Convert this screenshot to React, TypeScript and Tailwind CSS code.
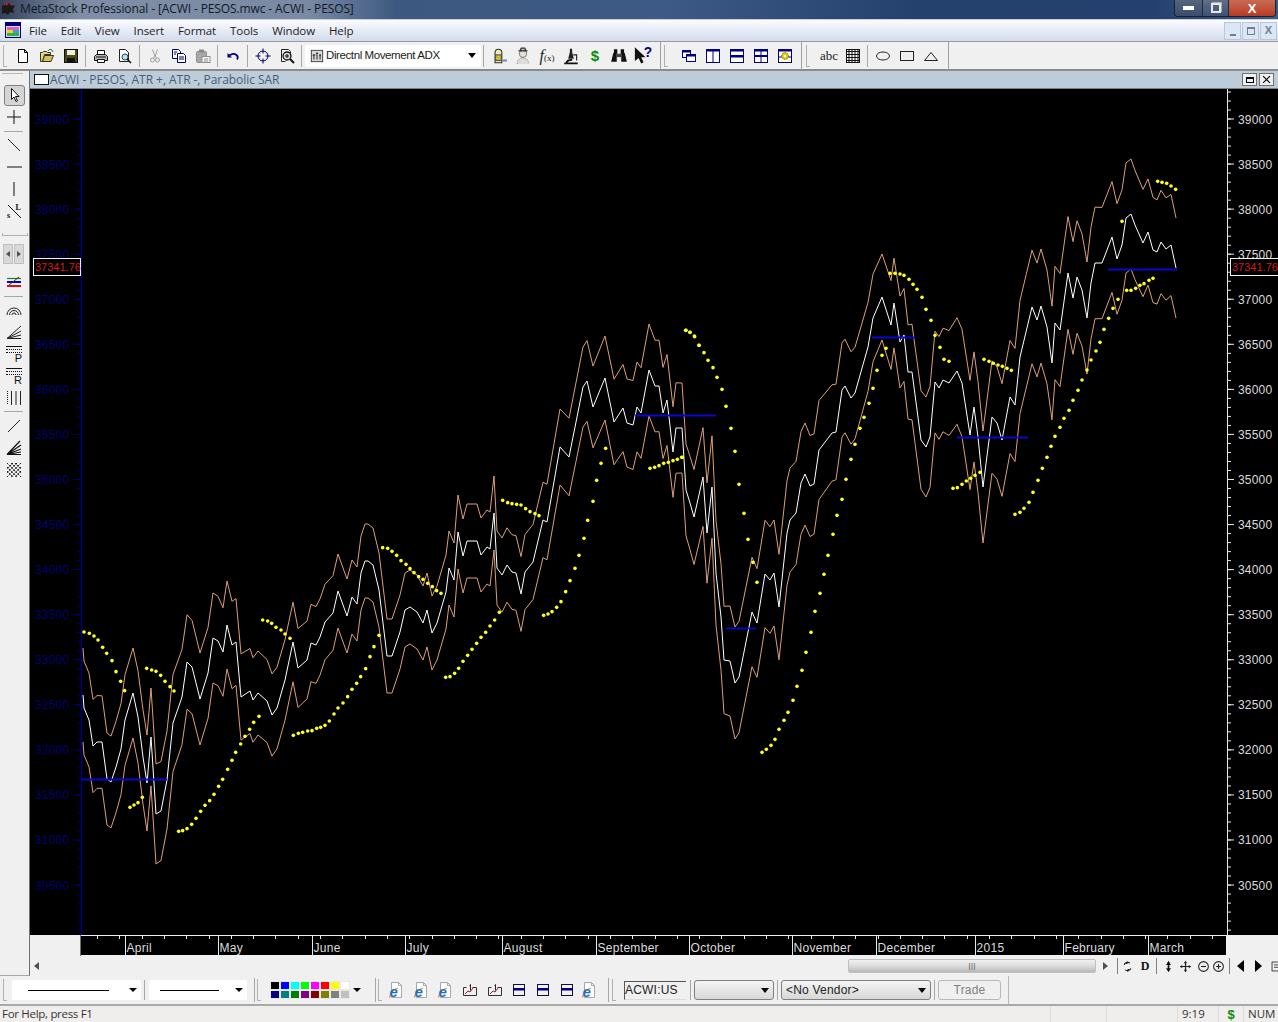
import React from 'react';

// price line as read off the chart, [x, y] in page pixels
const CLOSE: [number, number][] = [
  [83,695],[84,708],[89,720],[93,746],[97,742],[102,742],[107,779],[111,782],[116,767],[121,749],[125,720],[133,693],[138,717],[143,757],[147,783],[151,737],[156,814],[161,811],[167,780],[173,723],[182,697],[187,662],[192,667],[200,699],[208,673],[213,638],[218,641],[223,652],[227,625],[232,645],[236,642],[241,697],[250,691],[253,700],[258,693],[267,701],[272,715],[277,708],[285,680],[293,642],[298,668],[307,660],[311,643],[316,645],[320,637],[325,622],[333,613],[338,591],[347,616],[352,597],[357,604],[361,573],[365,561],[368,561],[373,565],[379,590],[387,656],[392,656],[400,632],[405,610],[410,607],[417,612],[423,623],[427,610],[432,633],[437,623],[446,592],[449,568],[454,580],[458,532],[463,556],[467,541],[477,541],[481,555],[487,547],[490,549],[494,513],[497,568],[502,575],[507,565],[512,572],[516,573],[521,594],[525,572],[533,562],[543,520],[547,522],[560,447],[569,457],[583,387],[587,381],[593,407],[605,378],[614,422],[623,408],[627,423],[633,425],[637,407],[641,413],[649,370],[655,386],[659,386],[663,413],[667,400],[673,452],[676,428],[682,428],[686,490],[690,503],[694,517],[703,477],[707,533],[712,487],[716,573],[721,617],[724,660],[730,661],[735,683],[739,677],[752,612],[757,623],[765,574],[770,580],[774,573],[779,607],[787,533],[790,520],[796,513],[801,483],[805,474],[810,486],[814,484],[819,450],[832,433],[836,432],[842,390],[845,386],[851,398],[855,393],[868,347],[873,318],[882,297],[891,325],[894,303],[900,342],[904,335],[908,372],[912,372],[921,440],[926,447],[930,437],[935,382],[939,388],[943,380],[949,383],[957,371],[962,383],[970,435],[974,407],[978,437],[983,487],[992,417],[997,423],[1002,440],[1010,397],[1015,405],[1020,357],[1032,307],[1037,320],[1041,306],[1047,327],[1052,363],[1055,323],[1060,330],[1068,273],[1073,298],[1077,277],[1082,290],[1087,318],[1091,283],[1095,263],[1102,263],[1112,237],[1117,259],[1122,245],[1126,218],[1131,214],[1135,225],[1143,243],[1148,232],[1153,250],[1157,252],[1161,242],[1166,249],[1171,245],[1176,268],
];

// half width of the ATR band at a few x positions
const BAND: [number, number][] = [
  [83,47],[133,45],[156,50],[200,46],[227,44],[290,40],[338,37],[392,37],[458,37],[494,37],[560,38],[605,42],[649,46],[682,45],[735,56],[774,53],[805,51],[882,43],[926,50],[983,56],[1041,57],[1131,55],[1176,50],
];

const bandAt = (x: number) => {
  for (let i = 0; i < BAND.length - 1; i++) {
    const [a, av] = BAND[i];
    const [b, bv] = BAND[i + 1];
    if (x >= a && x <= b) return av + ((bv - av) * (x - a)) / (b - a);
  }
  return 50;
};

const points = (off: number) => CLOSE.map(([x, y]) => `${x},${(y + off * bandAt(x)).toFixed(1)}`).join(' ');

// parabolic SAR dots, zoomed coordinates get scaled back with fromZoom
const fromZoom = (ox: number, oy: number, list: number[][]) => list.map(([x, y]) => [ox + x / 3, oy + y / 3]);

const SAR = [
  ...fromZoom(80, 620, [[12,36],[28,40],[42,48],[54,60],[68,82],[80,100],[96,122],[108,155],[122,184],[134,212]]),
  ...fromZoom(80, 620, [[200,145],[215,150],[228,154],[242,166],[255,184],[270,200],[282,213]]),
  ...fromZoom(80, 620, [[150,562],[162,555],[174,548],[187,532]]),
  ...fromZoom(80, 620, [[296,634],[308,632],[321,626],[335,613],[348,595],[362,574],[375,556],[389,542],[402,523],[416,499],[428,478],[443,448],[456,421],[467,397],[482,372],[495,349],[509,328],[521,307],[537,289]]),
  ...fromZoom(80, 620, [[548,0],[563,3],[575,10],[588,22],[603,30],[615,42],[630,55]]),
  ...fromZoom(80, 620, [[640,346],[655,340],[668,337],[683,333],[696,332],[710,325],[722,322],[735,316],[748,303]]),
  [334,714],[338,708],[343,703],
  ...fromZoom(320, 320, [[83,1130],[96,1108],[110,1090],[122,1070],[137,1046],[150,1010],[162,980],[177,946]]),
  ...fromZoom(320, 320, [[188,683],[203,685],[216,694],[230,706],[243,722],[258,733],[270,746],[282,758],[296,770],[309,778],[323,790],[337,800],[350,812],[363,820]]),
  ...fromZoom(320, 320, [[377,1072],[390,1070],[404,1060],[416,1045],[429,1024],[443,1006],[456,988],[470,970],[483,952],[497,937],[510,918],[524,900],[538,877]]),
  ...fromZoom(320, 320, [[548,541],[563,548],[576,551],[590,553],[603,555],[617,566],[630,575],[645,581],[657,587]]),
  ...fromZoom(320, 320, [[671,886],[684,882],[696,875],[710,862],[723,845],[737,815],[750,782],[765,745],[777,706],[792,655],[803,601],[819,544],[830,481],[843,430],[857,385]]),
  ...fromZoom(320, 320, [[990,445],[1004,442],[1017,437],[1031,430],[1045,427],[1059,422],[1072,418],[1087,412]]),
  ...fromZoom(320, 320, [[1097,31],[1110,37],[1123,48],[1137,76]]),
  ...fromZoom(680, 240, [[5,652],[18,271],[30,277],[44,290],[57,316],[72,338],[84,361],[99,383],[111,412],[126,448],[138,499],[153,565],[165,634],[177,733],[192,820],[204,898],[219,967],[231,1027]]),
  ...fromZoom(680, 240, [[246,1537],[259,1528],[273,1516],[285,1498],[297,1468],[312,1441],[324,1417],[339,1381],[351,1339],[366,1291],[378,1237],[393,1177],[405,1114],[420,1060],[432,1003],[444,946],[459,883],[471,826],[486,778],[498,718],[513,658],[525,613],[540,565],[552,532],[567,490],[579,445],[591,391],[606,346],[618,325]]),
  ...fromZoom(680, 240, [[630,100],[645,100],[660,102],[672,106],[687,118],[699,133],[711,148],[726,172],[738,208],[753,241],[765,286],[780,322],[792,358],[807,364]]),
  ...fromZoom(680, 240, [[819,745],[832,743],[846,733],[859,723],[872,715],[885,706],[900,697]]),
  ...fromZoom(680, 240, [[912,358],[927,364],[940,370],[954,375],[967,379],[981,385],[994,391]]),
  ...fromZoom(680, 240, [[1005,823],[1020,817],[1032,805],[1047,787],[1059,757],[1074,721],[1087,685],[1101,652],[1113,619],[1125,589],[1140,562],[1152,535],[1167,511],[1179,481],[1194,451]]),
  [1082,380],[1087,370],[1091,360],[1096,351],
  ...fromZoom(1000, 150, [[300,577],[312,538],[326,505],[339,475],[354,448],[366,214]]),
  ...fromZoom(1000, 150, [[380,421],[393,421],[407,415],[420,406],[432,401],[447,391],[459,385]]),
  ...fromZoom(1000, 150, [[473,94],[486,97],[500,100],[513,108],[527,118]]),
];

const LEVELS = [[82,167,779],[635,716,415],[726,756,628],[872,915,337],[957,1028,437],[1108,1177,269]];
const PRICES = Array.from({ length: 18 }, (_, i) => 39000 - i * 500);
const priceY = (p: number) => 119 + ((39000 - p) / 500) * 45.06;
const MINOR = Array.from({ length: 94 }, (_, i) => 92 + i * 9.012);
const MONTHS: [string, number][] = [['April',125],['May',218],['June',312],['July',405],['August',502],['September',596],['October',689],['November',792],['December',876],['2015',975],['February',1063],['March',1148]];
const WEEKS = Array.from({ length: 51 }, (_, i) => 97 + i * 22.3);
const SWATCHES = ['#000000','#0000ff','#00ffff','#00ff00','#ff00ff','#ff0000','#ffff00','#ffffff','#000080','#008080','#008000','#800080','#800000','#808000','#808080','#c0c0c0'];
const MENUS: [string, string][] = [['File','ml-[29px]'],['Edit','ml-[14px]'],['View','ml-[14px]'],['Insert','ml-[14px]'],['Format','ml-[14px]'],['Tools','ml-[14px]'],['Window','ml-[14px]'],['Help','ml-[14px]']];

function Ico({ children, s = 16 }: { children: React.ReactNode; s?: number }) {
  return <svg width={s} height={s} viewBox="0 0 16 16" fill="none" className="block">{children}</svg>;
}

function Tool({ children }: { children: React.ReactNode }) {
  return <div className="w-[24px] h-[24px] flex items-center justify-center shrink-0">{children}</div>;
}

function Sep() {
  return <div className="w-px h-[22px] bg-[#a8a8a8] ml-[2px] mr-[3px] shrink-0" />;
}

function Grip() {
  return <div className="w-[4px] h-[22px] border-l border-b border-[#b0b0b0] shrink-0" />;
}

function Side({ children }: { children: React.ReactNode }) {
  return <div className="w-[30px] h-[22px] flex items-center justify-center shrink-0 pr-[2px]">{children}</div>;
}

function SideRule() {
  return <div className="h-[6px] flex items-center pl-[4px] pr-[6px]"><div className="h-px w-full bg-[#a8a8a8]" /></div>;
}

function Arrow({ className = '' }: { className?: string }) {
  return <div className={`w-0 h-0 border-l-[4px] border-r-[4px] border-t-[4px] border-l-transparent border-r-transparent border-t-black ${className}`} />;
}

function Win({ kind }: { kind: 'cascade' | 'v' | 'h' | 'q' | 'gear' }) {
  return (
    <Ico>
      {kind === 'cascade' && <><rect x="1.5" y="2.5" width="8" height="7" fill="#fff" stroke="#000080" /><rect x="1" y="2" width="9" height="2.5" fill="#000080" /><rect x="5.5" y="6.5" width="9" height="7" fill="#fff" stroke="#000080" /><rect x="5" y="6" width="10" height="2.5" fill="#000080" /></>}
      {kind === 'v' && <><rect x="1.5" y="1.5" width="13" height="13" fill="#fff" stroke="#000080" /><rect x="1" y="1" width="14" height="2.5" fill="#000080" /><path d="M8 1v14" stroke="#000080" /></>}
      {kind === 'h' && <><rect x="1.5" y="1.5" width="13" height="13" fill="#fff" stroke="#000080" /><rect x="1" y="1" width="14" height="2.5" fill="#000080" /><rect x="1" y="7" width="14" height="2.5" fill="#000080" /></>}
      {kind === 'q' && <><rect x="1.5" y="1.5" width="13" height="13" fill="#fff" stroke="#000080" /><rect x="1" y="1" width="14" height="2.5" fill="#000080" /><rect x="1" y="7" width="14" height="2" fill="#000080" /><path d="M8 1v14" stroke="#000080" /></>}
      {kind === 'gear' && <><rect x="1.5" y="1.5" width="13" height="13" fill="#fff" stroke="#000080" /><rect x="1" y="1" width="14" height="2.5" fill="#000080" /><path d="M1 9h14" stroke="#000080" /><circle cx="8" cy="8" r="3.4" fill="#e0d000" stroke="#806000" strokeDasharray="1.5 1" /><circle cx="8" cy="8" r="1.2" fill="#fff" /></>}
    </Ico>
  );
}

function IeDoc() {
  return (
    <svg width="16" height="18" viewBox="0 0 16 18" fill="none" className="block">
      <path d="M3.5 1.5h7l3 3v12h-10z" fill="#fff" stroke="#a8a8a8" />
      <path d="M10.5 1.5v3h3" stroke="#a8a8a8" />
      <path d="M1.500 16.500c1-4 4-8 8.500-9.500" stroke="#d89a28" strokeWidth="1.300" />
      <text x="1.500" y="15.500" fontSize="15" fontWeight="700" fontStyle="italic" fill="#1f6fc4" fontFamily="Liberation Sans">e</text>
    </svg>
  );
}

function ChartIco() {
  return (
    <Ico>
      <path d="M1.5 5.5h3M10.5 5.5h4v8h-13v-8" stroke="#333" />
      <path d="M3 12l3-3 2 1 3-4" stroke="#a02020" />
      <path d="M7.5 3.5l1-1v6" stroke="#222" />
    </Ico>
  );
}

function WinBar() {
  return (
    <Ico>
      <rect x="2.5" y="2.5" width="11" height="11" stroke="#101030" fill="#f0f0f0" />
      <rect x="2" y="6" width="12" height="2.5" fill="#000080" />
    </Ico>
  );
}

function TopToolbar() {
  return (
    <div className="h-[30px] flex items-center bg-[#f0f0f0] border-t border-[#9a9a9a] border-b-2 border-b-[#8a8a8a] shrink-0 pl-[3px]">
      <Grip />
      <div className="w-[4px] shrink-0" />
      <Tool><Ico><path d="M3.5 1.5h6l3 3v10h-9z" fill="#fff" stroke="#000" /><path d="M9.5 1.5v3h3" stroke="#000" /></Ico></Tool>
      <Tool><Ico><path d="M1.5 13.5v-9h2l1-1h3l1 1h3v2h-6l-2 7z" fill="#e8d878" stroke="#333" /><path d="M3.5 13.5l2-6h9l-2.5 6z" fill="#d8c050" stroke="#333" /><path d="M9 3c1-2 3-2 4-1l1 2" stroke="#208020" /></Ico></Tool>
      <Tool><Ico><rect x="1.5" y="1.5" width="13" height="13" fill="#4a4a1a" stroke="#111" /><rect x="4" y="2" width="8" height="5" fill="#f4f0d8" /><rect x="4" y="10" width="8" height="4" fill="#111" /></Ico></Tool>
      <Sep />
      <Tool><Ico><path d="M4.5 6.5v-4h7v4" fill="#fff" stroke="#111" /><path d="M1.5 8.5l2-2h9l2 2v4h-13z" fill="#b8b8b8" stroke="#111" /><path d="M4.5 11.5h7v3h-7z" fill="#fff" stroke="#111" /><path d="M3 9h10" stroke="#111" /></Ico></Tool>
      <Tool><Ico><path d="M2.5 1.5h6l3 3v9h-9z" fill="#fff" stroke="#222" /><circle cx="8" cy="9" r="3" fill="#bfe0f0" stroke="#205060" /><path d="M10 11l4 4" stroke="#111" strokeWidth="1.6" /></Ico></Tool>
      <Sep />
      <Tool><Ico><path d="M5.5 1.5l2.5 7 2.5-7" stroke="#a0a0a0" /><circle cx="5.5" cy="12" r="2" stroke="#a0a0a0" /><circle cx="10.5" cy="12" r="2" stroke="#a0a0a0" /><path d="M6.5 10L8 8l1.500 2" stroke="#a0a0a0" /></Ico></Tool>
      <Tool><Ico><path d="M1.500 1.500h6l2 2v7h-8z" fill="#fff" stroke="#000060" /><path d="M6.500 5.500h6l2 2v7h-8z" fill="#fff" stroke="#000060" /><path d="M3 4h3M3 6h2M8 9h5M8 11h5" stroke="#000060" /></Ico></Tool>
      <Tool><Ico><rect x="1.500" y="3.500" width="10" height="11" rx="1" fill="#a8a8a8" stroke="#909090" /><rect x="4" y="1.500" width="5" height="3" fill="#888" /><rect x="7" y="8.500" width="8" height="6" fill="#f4f4f4" stroke="#909090" /><path d="M9 11h4M9 13h4" stroke="#909090" /></Ico></Tool>
      <Sep />
      <Tool><Ico><path d="M3.500 8.500C5 6 9 5 11.500 7c1.500 1.200 1.500 3 .5 4.500" stroke="#000080" strokeWidth="1.700" /><path d="M2.500 5v4.500H7z" fill="#000080" /></Ico></Tool>
      <Sep />
      <Tool><Ico><circle cx="8" cy="8" r="5" stroke="#000060" /><path d="M8 0.500v5M8 10.500v5M0.500 8h5M10.500 8h5" stroke="#000060" /></Ico></Tool>
      <Tool><Ico><path d="M2.500 1.500h7l2 2v3M2.500 1.500v12h4" fill="#fff" stroke="#222" /><circle cx="8" cy="8" r="4" fill="#d8d8d8" stroke="#111" strokeWidth="1.300" /><path d="M6 8h4M8 6v4" stroke="#111" /><path d="M11 11l4 4" stroke="#111" strokeWidth="2" /></Ico></Tool>
      <Sep />
      <div className="w-[176px] h-[22px] bg-white flex items-center shrink-0 rounded-[2px]">
        <div className="ml-[5px]"><Ico s={14}><rect x="1.500" y="1.500" width="13" height="13" fill="#d8d8d8" stroke="#333" /><path d="M4.500 12V6M8 12V4M11.500 12V6M3 7h3M7 5h2M10.500 7h2" stroke="#111" /></Ico></div>
        <span className="ml-[2px] text-[11.5px] text-[#222] tracking-[-0.4px] font-['Liberation_Sans',sans-serif] whitespace-nowrap">Directnl Movement ADX</span>
        <Arrow className="ml-auto mr-[5px] border-t-[5px]" />
      </div>
      <Sep />
      <Tool><Ico s={18}><path d="M4.500 14v-9a3 3 0 0 1 6 0v9z" fill="#f0e8c8" stroke="#333" /><rect x="5" y="7" width="5" height="5" fill="#d8c020" stroke="#555" /><path d="M11 12h4" stroke="#8090a0" strokeWidth="2" /></Ico></Tool>
      <Tool><Ico s={18}><circle cx="8" cy="6" r="3.200" fill="#e8e0d0" stroke="#888" /><path d="M4 3.500h8M5.500 3l1-2h3l1 2" stroke="#333" strokeWidth="1.200" /><path d="M3 15c0-4 2-5 5-5s5 1 5 5" fill="#ddd" stroke="#999" strokeDasharray="1 1" /></Ico></Tool>
      <Tool><span className="font-['Liberation_Serif',serif] italic text-[16px] leading-none text-[#222]">f<span className="text-[9px] not-italic">(x)</span></span></Tool>
      <Tool><Ico s={18}><path d="M2 14.500h12M4 14.500c0-2 2-3 5-3" stroke="#111" strokeWidth="1.500" /><path d="M7 1.500h2v3l1.500 6H5.500L7 4.500z" fill="#222" /><path d="M10 7h3v5" stroke="#222" /></Ico></Tool>
      <Tool><span className="text-[15px] font-bold leading-none text-[#0a8a0a] font-['Liberation_Sans',sans-serif]">$</span></Tool>
      <Tool><Ico s={18}><path d="M1 13l2-8h3v8zM15 13l-2-8h-3v8z" fill="#111" /><rect x="3.500" y="2" width="3" height="4" fill="#111" /><rect x="9.500" y="2" width="3" height="4" fill="#111" /><rect x="6" y="6" width="4" height="3" fill="#444" /></Ico></Tool>
      <Tool><Ico s={20}><path d="M1.500 1v11l3-2.500 2 4.500 2-1-2-4h3.500z" fill="#111" /><text x="8.500" y="9" fontSize="11" fontWeight="700" fill="#000080" fontFamily="Liberation Sans">?</text></Ico></Tool>
      <div className="w-[6px] h-[28px] border-r border-[#a0a0a0] shrink-0" />
      <div className="w-[3px] shrink-0" />
      <Grip />
      <div className="w-[9px] shrink-0" />
      <Tool><Win kind="cascade" /></Tool>
      <Tool><Win kind="v" /></Tool>
      <Tool><Win kind="h" /></Tool>
      <Tool><Win kind="q" /></Tool>
      <Tool><Win kind="gear" /></Tool>
      <div className="w-[5px] h-[28px] border-r border-[#a0a0a0] shrink-0" />
      <div className="w-[4px] shrink-0" />
      <Grip />
      <div className="w-[7px] shrink-0" />
      <Tool><span className="text-[13px] leading-none text-[#222] font-['Liberation_Serif',serif]">abc</span></Tool>
      <Tool><Ico><rect x="1.500" y="1.500" width="13" height="13" fill="#fff" stroke="#111" /><path d="M1 3.500h14M1 6.500h14M1 9.500h14M1 12.500h14M4 1v14M7 1v14M10 1v14M13 1v14" stroke="#111" /></Ico></Tool>
      <Sep />
      <Tool><Ico><ellipse cx="8" cy="8" rx="6.500" ry="4" stroke="#222" /></Ico></Tool>
      <Tool><Ico><rect x="1.500" y="3.500" width="13" height="9" stroke="#222" /></Ico></Tool>
      <Tool><Ico><path d="M1.500 12.500h13L8 4.500z" stroke="#222" /></Ico></Tool>
      <div className="w-[6px] h-[28px] border-r border-[#a0a0a0] shrink-0" />
    </div>
  );
}

function LeftToolbar() {
  return (
    <div className="w-[30px] bg-[#f0f0f0] border-r border-[#707070] border-b border-b-[#a8a8a8] flex flex-col shrink-0 pt-[13px] relative">
      <div className="absolute left-[2px] right-[6px] top-[2px] h-px bg-[#b8b8b8]" />
      <Side><div className="w-[21px] h-[21px] bg-[#d4d4d4] border border-[#808080] rounded-[3px] flex items-center justify-center"><Ico><path d="M5.500 1.500v11l2.500-2.500 2 4.500 1.500-.7-2-4.300h3.500z" fill="#fff" stroke="#111" /></Ico></div></Side>
      <Side><Ico><path d="M8 1v14M1 8h14" stroke="#111" /></Ico></Side>
      <SideRule />
      <Side><Ico><path d="M2 2l12 12" stroke="#222" /></Ico></Side>
      <Side><Ico><path d="M1 8h15" stroke="#111" /></Ico></Side>
      <Side><Ico><path d="M8 1v14" stroke="#111" /></Ico></Side>
      <Side><Ico><path d="M2 2l13 13" stroke="#111" /><text x="9.500" y="7" fontSize="8" fontWeight="700" fontFamily="Liberation Serif" fill="#111">L</text><text x="1" y="14.500" fontSize="8" fontWeight="700" fontFamily="Liberation Serif" fill="#111">s</text></Ico></Side>
      <div className="h-[22px] flex items-center pl-[2px] pr-[1px] pt-[2px]"><div className="h-[3px] w-full border border-t-0 border-[#b0b0b0]" /></div>
      <div className="h-[22px] flex justify-center pr-[2px] shrink-0">
        <div className="w-[10px] h-[20px] bg-[#d8d8d8] border border-[#c0c0c0] flex items-center justify-center"><div className="w-0 h-0 border-y-[3px] border-r-[4px] border-y-transparent border-r-[#505050]" /></div>
        <div className="w-[10px] h-[20px] ml-px bg-[#d8d8d8] border border-[#c0c0c0] flex items-center justify-center"><div className="w-0 h-0 border-y-[3px] border-l-[4px] border-y-transparent border-l-[#505050]" /></div>
      </div>
      <div className="h-[5px]" />
      <Side><Ico><path d="M1 4.500h14" stroke="#208020" strokeWidth="1.200" /><path d="M1 8h14" stroke="#0000d0" strokeWidth="2" /><path d="M1 12h14" stroke="#e01010" strokeWidth="2" /><path d="M3 11L13 3" stroke="#333" /></Ico></Side>
      <SideRule />
      <Side><Ico><path d="M1 13a7 7 0 0 1 14 0M3.500 13a4.500 4.500 0 0 1 9 0M6 13a2 2 0 0 1 4 0" stroke="#222" /></Ico></Side>
      <Side><Ico><path d="M1 14.500L15 2M1 14.500L15 7M1 14.500L15 11M1 14.500h14" stroke="#222" /></Ico></Side>
      <Side><div className="w-[16px] h-[16px] relative font-['Liberation_Sans',sans-serif]"><div className="border-t border-[#111] h-[3px]" /><div className="border-t border-dotted border-[#111] h-[3px]" /><div className="border-t border-dotted border-[#111] h-[3px]" /><span className="absolute right-0 bottom-[-2px] text-[11px] leading-none text-[#111]">P</span></div></Side>
      <Side><div className="w-[16px] h-[16px] relative font-['Liberation_Sans',sans-serif]"><div className="border-t border-[#111] h-[3px]" /><div className="border-t border-dotted border-[#111] h-[3px]" /><div className="border-t border-dotted border-[#111] h-[3px]" /><span className="absolute right-0 bottom-[-2px] text-[11px] leading-none text-[#111]">R</span></div></Side>
      <Side><Ico><path d="M1.500 1v14" stroke="#222" strokeDasharray="1 1" /><path d="M5.500 1v14M10 1v14M14.500 1v14" stroke="#222" /></Ico></Side>
      <div className="h-[4px] flex items-end pl-[4px] pr-[6px] -mt-[1px]"><div className="h-px w-full bg-[#a8a8a8]" /></div>
      <div className="h-[3px]" />
      <Side><Ico><path d="M2 14L14 2" stroke="#222" /></Ico></Side>
      <Side><Ico><path d="M1 14.500L14 1M1 14.500L15 5M1 14.500L15 9M1 14.500L15 12M1 14.500h14" stroke="#111" strokeWidth="1.200" /></Ico></Side>
      <Side><Ico><path d="M1 1l14 14M1 5l10 10M1 9l6 6M5 1l10 10M9 1l6 6M15 1L1 15M11 1L1 11M7 1L1 7M15 5L5 15M15 9l-6 6" stroke="#222" strokeDasharray="2 1" /></Ico></Side>
    </div>
  );
}

function Chart() {
  return (
    <svg viewBox="30 89 1248 846" className="block w-[1248px] h-[846px] bg-black shrink-0" fontFamily="Liberation Sans, Arial, sans-serif" fontSize="12">
      {/* left scale, nearly invisible on black */}
      <path d="M81.500 89v846" stroke="#000080" strokeWidth="1.400" />
      {MINOR.map(y => <path key={y} d={`M77 ${y}h4`} stroke="#000060" />)}
      {PRICES.map(p => (
        <g key={p}>
          <path d={`M73 ${priceY(p)}h8`} stroke="#000070" />
          <text x="35" y={priceY(p) + 4.500} fill="#000070" letterSpacing="0.200">{p}</text>
        </g>
      ))}
      <polyline points={points(-1)} fill="none" stroke="#e8a87c" strokeWidth="0.950" />
      <polyline points={points(1)} fill="none" stroke="#e8a87c" strokeWidth="0.950" />
      <polyline points={points(0)} fill="none" stroke="#ffffff" />
      {/* wider than 1px so the blue survives the screenshot's chroma smearing */}
      {LEVELS.map(([a, b, y]) => <path key={a} d={`M${a} ${y + 0.500}H${b}`} stroke="#0808d0" strokeWidth="1.800" />)}
      {SAR.map(([x, y], i) => <circle key={i} cx={x} cy={y} r="1.800" fill="#ffff20" />)}
      {/* right scale */}
      <path d="M1227.500 89v846" stroke="#e8e8e8" />
      {MINOR.map(y => <path key={y} d={`M1227 ${y}h4`} stroke="#e8e8e8" />)}
      {PRICES.map(p => (
        <g key={p}>
          <path d={`M1227 ${priceY(p)}h7`} stroke="#e8e8e8" />
          <text x="1238" y={priceY(p) + 4.500} fill="#dcdcdc" letterSpacing="0.200">{p}</text>
        </g>
      ))}
      <rect x="33.500" y="258.500" width="47" height="17" fill="#000" stroke="#f0f0f0" />
      <text x="35" y="271" fill="#d81818" fontSize="11">37341.76</text>
      <rect x="1230.500" y="258.500" width="50" height="17" fill="#000" stroke="#f0f0f0" />
      <text x="1232" y="271" fill="#d81818" fontSize="11">37341.76</text>
    </svg>
  );
}

function TimeAxis() {
  return (
    <div className="flex h-[21px] shrink-0 bg-[#f0f0f0]">
      <div className="w-[51px] border-r border-[#707070] shrink-0" />
      <svg viewBox="81 935 1145 21" className="block w-[1145px] h-[21px] bg-black shrink-0" fontFamily="Liberation Sans, Arial, sans-serif" fontSize="12">
        <path d="M81 935.500h1145M81 955.500h1145" stroke="#f0f0f0" />
        {WEEKS.map(x => <path key={x} d={`M${Math.round(x)}.5 935v4`} stroke="#e8e8e8" />)}
        {MONTHS.map(([m, x]) => (
          <g key={m}>
            <path d={`M${x}.5 935v20`} stroke="#e8e8e8" />
            <text x={x + 1.500} y="951.500" fill="#dcdcdc" letterSpacing="0.300">{m}</text>
          </g>
        ))}
      </svg>
    </div>
  );
}

function ScrollRow() {
  const dim = 'w-[18px] h-[18px] flex items-center justify-center shrink-0';
  return (
    <div className="flex items-center h-[20px] bg-[#f0f0f0] shrink-0 pl-[4px]">
      <div className="w-0 h-0 border-y-[4px] border-r-[5px] border-y-transparent border-r-[#505050]" />
      <div className="ml-auto w-[248px] h-[14px] bg-gradient-to-b from-[#f0f0f0] via-[#dcdcdc] to-[#b8b8b8] border border-[#c0c0c0] rounded-[2px] flex items-center justify-center text-[9px] leading-none text-[#666]">III</div>
      <div className="w-[182px] flex items-center shrink-0 overflow-hidden">
        <div className={dim}><div className="w-0 h-0 border-y-[4px] border-l-[5px] border-y-transparent border-l-[#505050]" /></div>
        <div className="w-px h-[16px] bg-[#808080] ml-[3px] shrink-0" />
        <div className={dim}><Ico s={13}><path d="M8 1v4H5zM8 15v-4h3z" fill="#222" /><path d="M4 6c0-3 5-4 7-2M12 10c0 3-5 4-7 2" stroke="#222" strokeWidth="1.300" /></Ico></div>
        <div className={`${dim} font-['Liberation_Serif',serif] font-bold text-[12px] text-[#111]`}>D</div>
        <div className="w-px h-[16px] bg-[#808080] ml-[2px] mr-[2px] shrink-0" />
        <div className={dim}><Ico s={13}><path d="M8 1l3 5H5zM8 15l-3-5h6z" fill="#111" /><path d="M8 5v6" stroke="#111" strokeWidth="2" /></Ico></div>
        <div className={`${dim} -ml-px`}><Ico s={13}><path d="M8 2v12M2 8h12" stroke="#222" strokeWidth="1.500" /><path d="M8 1l2 3H6zM8 15l-2-3h4zM1 8l3-2v4zM15 8l-3 2V6z" fill="#222" /></Ico></div>
        <div className={dim}><Ico s={13}><circle cx="8" cy="8" r="6" stroke="#222" strokeWidth="1.300" /><path d="M5 8h6" stroke="#222" strokeWidth="1.400" /></Ico></div>
        <div className={`${dim} -ml-[3px]`}><Ico s={13}><circle cx="8" cy="8" r="6" stroke="#222" strokeWidth="1.300" /><path d="M5 8h6M8 5v6" stroke="#222" strokeWidth="1.400" /></Ico></div>
        <div className="w-px h-[16px] bg-[#808080] ml-[2px] mr-px shrink-0" />
        <div className={dim}><div className="w-0 h-0 border-y-[6px] border-r-[7px] border-y-transparent border-r-black" /></div>
        <div className={dim}><div className="w-0 h-0 border-y-[6px] border-l-[7px] border-y-transparent border-l-black" /></div>
        <div className={dim}><Ico s={13}><rect x="2.500" y="2.500" width="11" height="11" stroke="#222" /><path d="M5 6h6M5 9h6" stroke="#222" /></Ico></div>
      </div>
    </div>
  );
}

function BottomToolbar() {
  const field = "h-[20px] rounded-[2px] flex items-center shrink-0";
  return (
    <div className="h-[28px] bg-[#f0f0f0] flex items-center shrink-0 pl-[3px] font-['Liberation_Sans',sans-serif] text-[12px] text-[#222]">
      <Grip />
      <div className={`${field} w-[129px] bg-white ml-[5px]`}>
        <div className="ml-[16px] w-[81px] h-px bg-black" />
        <Arrow className="ml-auto mr-[4px]" />
      </div>
      <div className="w-px h-[20px] bg-[#a8a8a8] ml-[3px] shrink-0" />
      <div className={`${field} w-[98px] bg-white ml-[4px]`}>
        <div className="ml-[11px] w-[59px] h-px bg-black" />
        <Arrow className="ml-auto mr-[4px]" />
      </div>
      <div className="w-px h-[24px] bg-[#a8a8a8] ml-[7px] shrink-0" />
      <div className="w-[2px] shrink-0" />
      <Grip />
      <div className="grid grid-cols-[repeat(8,10px)] grid-rows-[repeat(2,9px)] ml-[9px] shrink-0">
        {SWATCHES.map(c => (
          <div key={c} className="border border-[#e8e8e8]" style={{ backgroundColor: c }} />
        ))}
      </div>
      <Arrow className="ml-[3px]" />
      <div className="w-px h-[24px] bg-[#a8a8a8] ml-[14px] shrink-0" />
      <div className="w-[2px] shrink-0" />
      <Grip />
      <div className="w-[2px] shrink-0" />
      <Tool><IeDoc /></Tool>
      <div className="w-px shrink-0" />
      <Tool><IeDoc /></Tool>
      <Tool><IeDoc /></Tool>
      <div className="w-px shrink-0" />
      <Tool><ChartIco /></Tool>
      <div className="w-px shrink-0" />
      <Tool><ChartIco /></Tool>
      <Tool><WinBar /></Tool>
      <Tool><WinBar /></Tool>
      <Tool><WinBar /></Tool>
      <div className="-ml-[2px] shrink-0"><Tool><IeDoc /></Tool></div>
      <div className="w-px h-[24px] bg-[#a8a8a8] ml-[7px] shrink-0" />
      <div className="w-[3px] shrink-0" />
      <Grip />
      <div className="w-[8px] shrink-0" />
      <div className="w-[62px] h-[19px] border-t border-l border-[#555] border-b border-b-[#ddd] bg-[#f0f0f0] flex items-center shrink-0 tracking-[0.2px]">ACWI:US</div>
      <div className="w-px h-[20px] bg-[#a8a8a8] ml-[4px] shrink-0" />
      <div className={`${field} w-[80px] ml-[3px] border border-[#808080] rounded-[3px] bg-gradient-to-b from-[#f4f4f4] to-[#d8d8d8]`}>
        <Arrow className="ml-auto mr-[4px] border-t-[5px]" />
      </div>
      <div className="w-px h-[20px] bg-[#a8a8a8] ml-[3px] shrink-0" />
      <div className={`${field} w-[150px] ml-[3px] border border-[#808080] rounded-[3px] bg-gradient-to-b from-[#f4f4f4] to-[#d8d8d8] pl-[4px] tracking-[0.2px]`}>
        &lt;No Vendor&gt;
        <Arrow className="ml-auto mr-[4px] border-t-[5px]" />
      </div>
      <div className="w-px h-[20px] bg-[#a8a8a8] ml-[3px] shrink-0" />
      <div className="w-[63px] h-[20px] ml-[3px] border border-[#b8b8b8] rounded-[3px] flex items-center justify-center text-[#808080] shrink-0 tracking-[0.2px]">Trade</div>
      <div className="w-px h-[28px] bg-[#b8b8b8] ml-[7px] shrink-0" />
    </div>
  );
}

function StatusBar() {
  const panel = 'h-full flex items-center border-l border-[#dcdcdc] shrink-0';
  return (
    <div className="h-[18px] flex items-center bg-[#f0eeec] border-t-2 border-[#a8a8a8] text-[11.5px] leading-none text-[#333] shrink-0 font-['Open_Sans',sans-serif]">
      <span className="ml-[2px] tracking-[-0.3px]">For Help, press F1</span>
      <div className={`${panel} ml-auto w-[56px]`} />
      <div className={`${panel} w-[71px]`} />
      <div className={`${panel} w-[41px] pl-[4px]`}><span>9:19</span></div>
      <div className={`${panel} w-[25px] justify-center text-[#0a8a0a] font-bold font-['Liberation_Sans',sans-serif] text-[13px]`}>$</div>
      <div className={`${panel} w-[35px] pl-[4px]`}>NUM</div>
    </div>
  );
}

export default function App() {
  return (
    <div className="w-[1278px] h-[1022px] overflow-hidden flex flex-col bg-[#f0f0f0] font-['Open_Sans',sans-serif]">
      {/* window title */}
      <div className="h-[20px] flex items-start shrink-0 border-b border-[#c8d0dc] bg-[linear-gradient(90deg,#33405a_0%,#7f8ea6_6%,#7a8aa4_24%,#3d5880_31%,#3c5a85_52%,#24406c_72%,#24406e_90%,#3a5a8a_100%)]">
        <div className="w-[16px] h-[16px] ml-[1px] mt-[1px] shrink-0">
          <Ico><path d="M1 5l3-3 2 3 2-3 3 2 3 1-2 3 1 4-4-1-2 3-3-2-3 1z" fill="#1a1a1a" /><path d="M3 4l2-2 1 2M9 3l2 1" stroke="#d01818" strokeWidth="1.500" /></Ico>
        </div>
        <span className="ml-[3px] mt-[1px] text-[12px] leading-[16px] text-[#111827] whitespace-nowrap tracking-[-0.11px]">MetaStock Professional - [ACWI - PESOS.mwc - ACWI - PESOS]</span>
        <div className="ml-auto mr-[2px] flex h-[17px] shrink-0 border border-t-0 border-[#1a2030] rounded-b-[4px] overflow-hidden">
          <div className="w-[28px] flex items-center justify-center border-r border-[#1a2a44] bg-gradient-to-b from-[#55657f] to-[#3b4d6c]"><div className="w-[11px] h-[4px] bg-white" /></div>
          <div className="w-[26px] flex items-center justify-center border-r border-[#1a2a44] bg-gradient-to-b from-[#5f6f88] to-[#3f5272]"><div className="w-[10px] h-[10px] border-2 border-[#e8e8e8] shadow-[1px_-1px_0_#b0b0b0]" /></div>
          <div className="w-[46px] flex items-center justify-center bg-gradient-to-b from-[#c86a54] to-[#b83a20] text-white font-bold text-[13px] leading-none font-['Liberation_Sans',sans-serif]">X</div>
        </div>
      </div>
      {/* menu bar */}
      <div className="h-[21px] flex items-center relative shrink-0 text-[11.5px] text-[#222] bg-gradient-to-b from-[#fbfcff] to-[#d3dbec]">
        <div className="absolute left-[5px] top-[2px] w-[16px] h-[16px]">
          <Ico><rect x="0.500" y="0.500" width="15" height="15" fill="#d8d8e8" stroke="#000060" /><rect x="1" y="1" width="14" height="3" fill="#000080" /><rect x="2" y="5" width="12" height="3" fill="#e060c0" /><rect x="2" y="8" width="6" height="3" fill="#f0d020" /><rect x="8" y="8" width="6" height="3" fill="#30a0e0" /><rect x="2" y="11" width="12" height="3" fill="#30b040" /></Ico>
        </div>
        {MENUS.map(([m, ml]) => <span key={m} className={`${ml} tracking-[-0.1px]`}>{m}</span>)}
        <div className="ml-auto flex mr-px h-[18px] gap-px text-[#7f8ea6] shrink-0">
          <div className="w-[17px] bg-[#dce6f4] border border-[#b8c8d8] flex items-end justify-center pb-[3px]"><div className="w-[6px] h-[2px] bg-[#6f7f94]" /></div>
          <div className="w-[17px] bg-[#dce6f4] border border-[#b8c8d8] flex items-center justify-center"><div className="w-[8px] h-[8px] border border-t-2 border-[#6f7f94]" /></div>
          <div className="w-[17px] bg-[#dce6f4] border border-[#b8c8d8] flex items-center justify-center font-bold text-[11px] leading-none font-['Liberation_Sans',sans-serif] text-[#6f7f94]">X</div>
        </div>
      </div>
      <TopToolbar />
      <div className="flex h-[905px] shrink-0">
        <LeftToolbar />
        <div className="flex flex-col flex-1 min-w-0">
          {/* chart window title */}
          <div className="h-[18px] flex items-center bg-[#bccdd9] border-b border-[#808080] shrink-0">
            <div className="w-[15px] h-[11px] ml-[4px] bg-white border border-[#111] shrink-0" />
            <span className="ml-px text-[12px] leading-none text-[#4a5a78] tracking-[-0.05px] whitespace-nowrap">ACWI - PESOS, ATR +, ATR -, Parabolic SAR</span>
            <div className="ml-auto flex gap-[2px] mr-[4px] shrink-0">
              <div className="w-[15px] h-[13px] bg-[#f0f0f0] border border-[#707070] flex items-center justify-center"><div className="w-[8px] h-[6px] border border-t-2 border-black" /></div>
              <div className="w-[15px] h-[13px] bg-[#f0f0f0] border border-[#707070] flex items-center justify-center"><Ico s={11}><path d="M3 3l10 10M13 3L3 13" stroke="#000" strokeWidth="1.600" /></Ico></div>
            </div>
          </div>
          <Chart />
          <TimeAxis />
          <ScrollRow />
        </div>
      </div>
      <BottomToolbar />
      <StatusBar />
    </div>
  );
}
